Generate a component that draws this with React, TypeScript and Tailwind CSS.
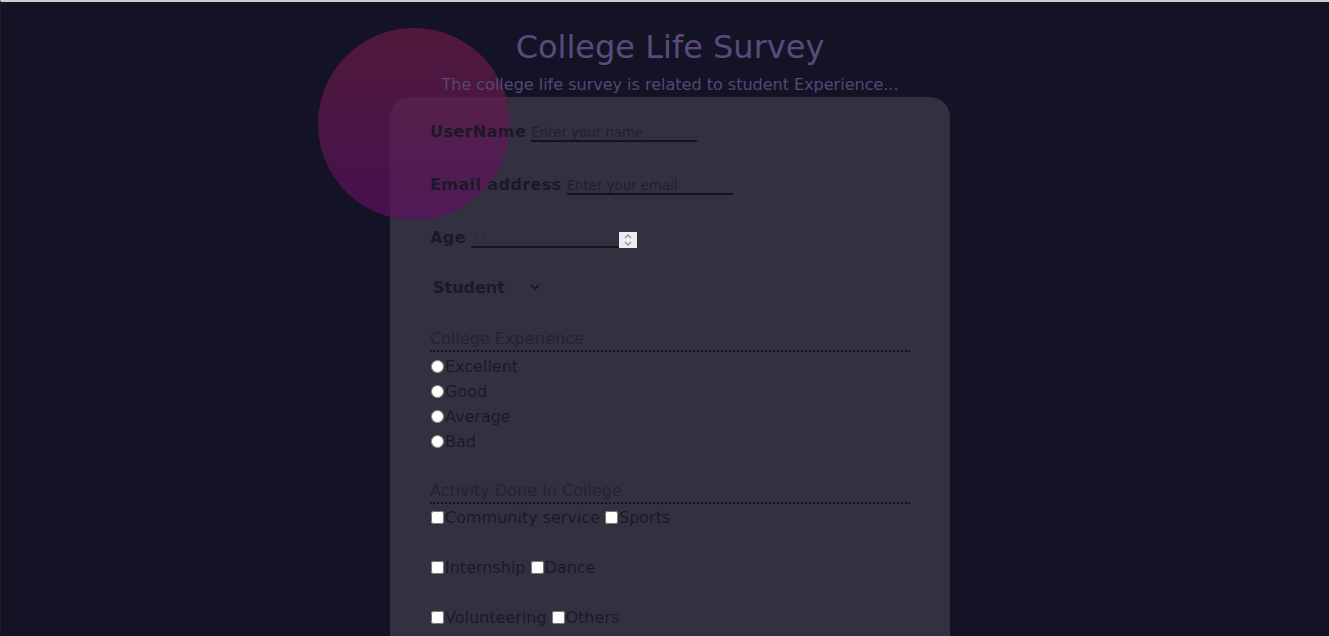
import { useState } from "react";

const experiences = ["Excellent", "Good", "Average", "Bad"];

const activityRows = [
  ["Community service", "Sports"],
  ["Internship", "Dance"],
  ["Volunteering", "Others"],
];

export default function App() {
  const [experience, setExperience] = useState("");
  const [activities, setActivities] = useState<string[]>([]);

  // toggle di una attività nella lista
  const toggleActivity = (name: string) => {
    setActivities((prev) =>
      prev.includes(name) ? prev.filter((a) => a !== name) : [...prev, name],
    );
  };

  return (
    <main className="min-h-screen w-full overflow-hidden border-t-2 border-l border-t-[#cfcfcf] border-l-[#1e1e22] bg-[#141325] font-['DejaVu_Sans',sans-serif] text-[#1b1929]">
      <div className="flex flex-col items-center pl-[10px]">
        {/* HEADER */}
        <h1 className="mt-[27px] text-[32px] leading-[37px] text-[#5b4a7c]">
          College Life Survey
        </h1>
        <p className="relative z-10 mt-[9px] text-[16px] leading-[19px] text-[#574775]">
          The college life survey is related to student Experience...
        </p>

        {/* FORM CARD */}
        <form className="relative mt-[3px] w-[560px] rounded-[20px] bg-[#33313f] px-[40px] pt-[23px] pb-10">
          {/* cerchio decorativo */}
          <div className="pointer-events-none absolute -top-[69px] -left-[72px] h-[192px] w-[192px] rounded-full bg-gradient-to-b from-[#6b1a44] to-[#5a0f60] opacity-70"></div>

          <div className="relative z-10 flex flex-col">
            <div className="flex h-[22px] items-baseline gap-[5px]">
              <label className="text-[16px] font-bold tracking-[0.4px]">UserName</label>
              <input
                type="text"
                placeholder="Enter your name"
                className="h-[16px] w-[166px] border-b-2 border-[#15131f] bg-transparent text-[13.33px] outline-none placeholder:text-[#221f30]"
              />
            </div>

            <div className="mt-[31px] flex h-[22px] items-baseline gap-[5px]">
              <label className="text-[16px] font-bold tracking-[0.4px]">Email address</label>
              <input
                type="email"
                placeholder="Enter your email"
                className="h-[16px] w-[166px] border-b-2 border-[#15131f] bg-transparent text-[13.33px] outline-none placeholder:text-[#221f30]"
              />
            </div>

            <div className="mt-[31px] flex h-[22px] items-baseline gap-[5px]">
              <label className="text-[16px] font-bold tracking-[0.4px]">Age</label>
              <div className="relative">
                <input
                  type="number"
                  placeholder="22"
                  className="h-[16px] w-[166px] border-b-2 border-[#15131f] bg-transparent text-[13.33px] outline-none placeholder:text-[#2b2838] [&::-webkit-inner-spin-button]:appearance-none"
                />
                {/* spinner */}
                <div className="pointer-events-none absolute right-0 bottom-[2px] flex h-[16px] w-[18px] flex-col items-center justify-center gap-[2px] bg-[#ebebf0]">
                  <svg width="8" height="5" viewBox="0 0 8 5" fill="none">
                    <path d="M1 4L4 1L7 4" stroke="#8a8a96" strokeWidth="1.2" />
                  </svg>
                  <svg width="8" height="5" viewBox="0 0 8 5" fill="none">
                    <path d="M1 1L4 4L7 1" stroke="#8a8a96" strokeWidth="1.2" />
                  </svg>
                </div>
              </div>
            </div>

            <div className="mt-[29px] flex">
              <select className="-ml-[1px] w-[114px] bg-transparent text-[16px] font-bold outline-none">
                <option>Student</option>
                <option>Alumni</option>
                <option>Faculty</option>
              </select>
            </div>

            {/* COLLEGE EXPERIENCE */}
            <div className="mt-[31px] border-b-2 border-dotted border-[#15131f] pb-[2px] text-[16px] leading-[19px] text-[#25232f]">
              College Experience
            </div>
            <div className="mt-[2px] flex flex-col">
              {experiences.map((exp) => (
                <label key={exp} className="flex h-[25px] items-center text-[16px]">
                  <input
                    type="radio"
                    name="experience"
                    checked={experience === exp}
                    onChange={() => setExperience(exp)}
                    className="mr-[1px] ml-[1px] h-[13px] w-[13px]"
                  />
                  {exp}
                </label>
              ))}
            </div>

            {/* ACTIVITY */}
            <div className="mt-[27px] border-b-2 border-dotted border-[#15131f] pb-[2px] text-[16px] leading-[19px] text-[#25232f]">
              Activity Done In College
            </div>
            <div className="mt-[4px] flex flex-col">
              {activityRows.map((row, i) => (
                <div key={i} className="flex h-[50px] items-start text-[16px] leading-[19px]">
                  {row.map((name, j) => (
                    <label key={name} className={`flex items-center ${j > 0 ? "ml-[5px]" : "ml-[1px]"}`}>
                      <input
                        type="checkbox"
                        checked={activities.includes(name)}
                        onChange={() => toggleActivity(name)}
                        className="mr-[1px] h-[13px] w-[13px]"
                      />
                      {name}
                    </label>
                  ))}
                </div>
              ))}
            </div>
          </div>
        </form>
      </div>
    </main>
  );
}
